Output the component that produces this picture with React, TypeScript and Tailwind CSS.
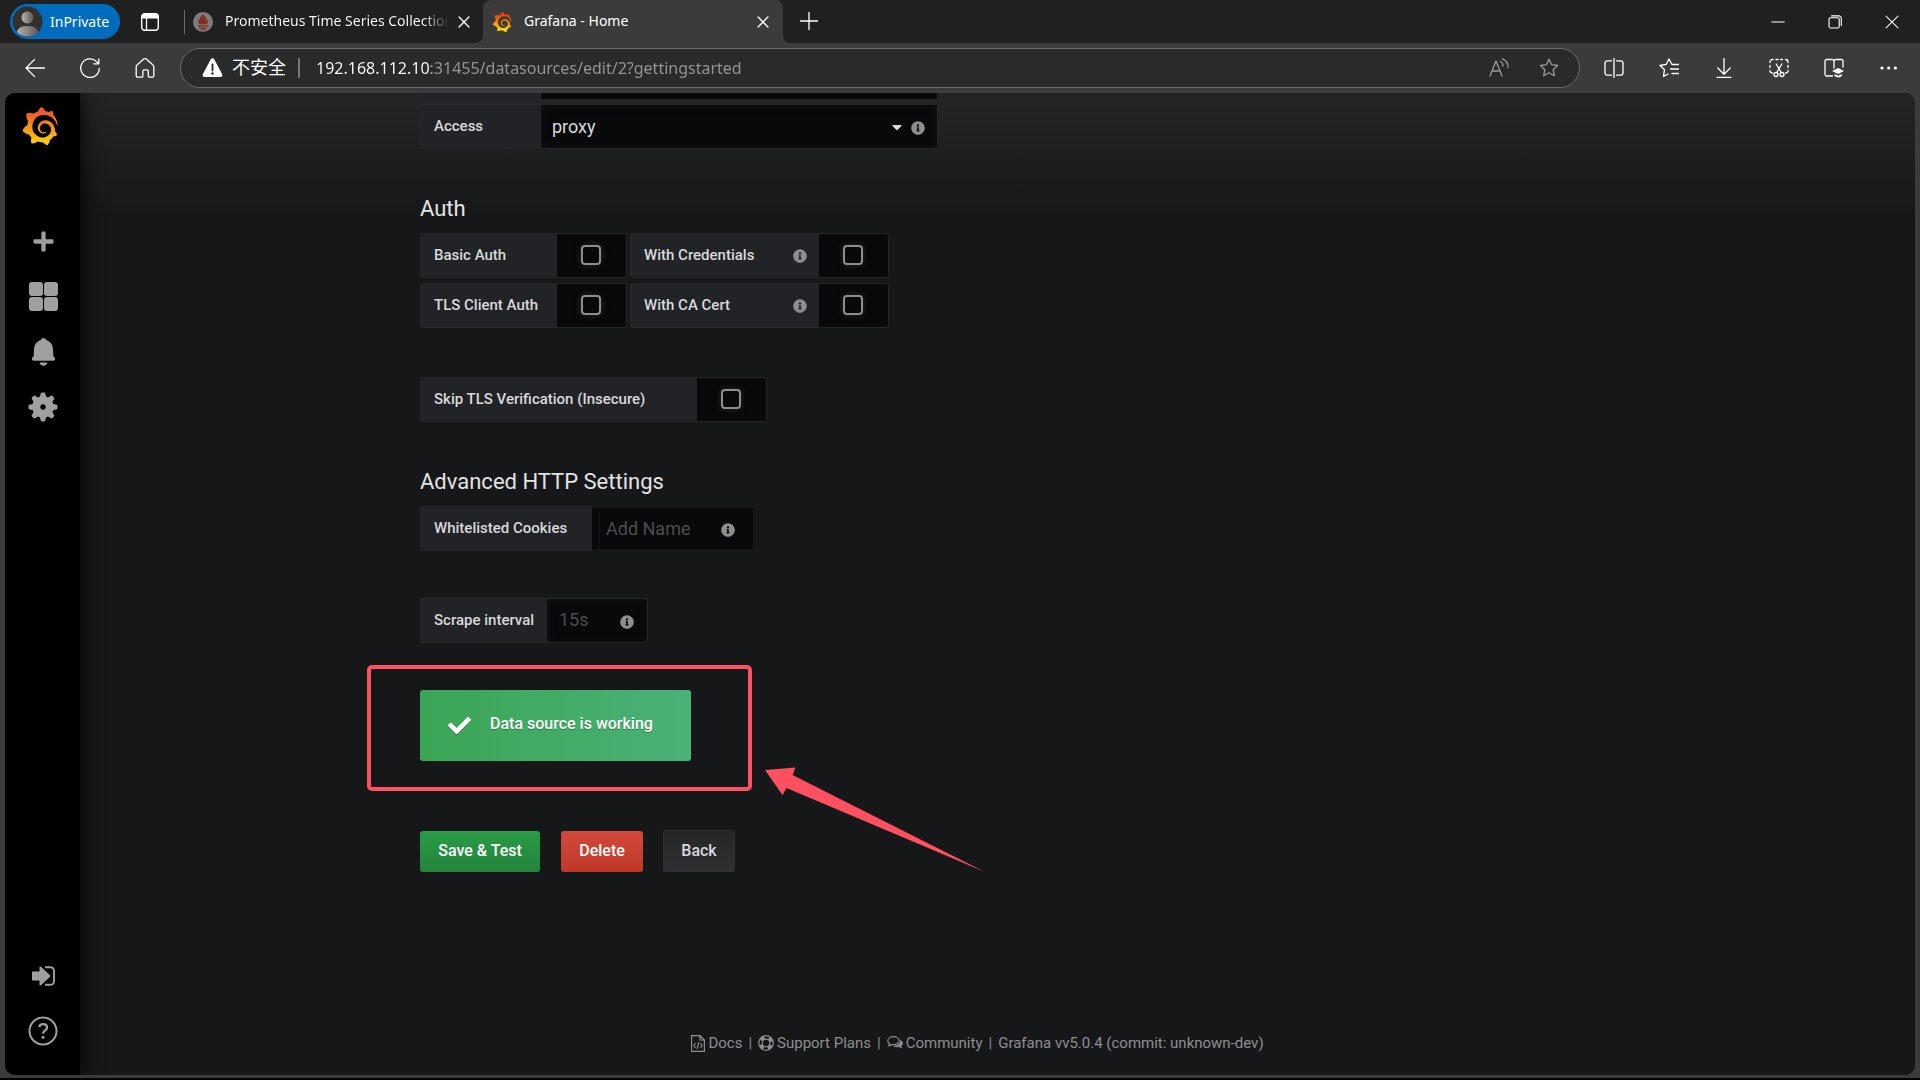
import React from "react";
import { SiGrafana } from "react-icons/si";
import { FaInfoCircle, FaCaretDown, FaCheck, FaPlus } from "react-icons/fa";

type IconProps = { className?: string; children: React.ReactNode; size?: number; weight?: number };

function Line({ className = "", children, size = 20, weight = 1.3 }: IconProps) {
  return (
    <svg
      className={className}
      width={size}
      height={size}
      viewBox="0 0 20 20"
      fill="none"
      stroke="currentColor"
      strokeWidth={weight}
      strokeLinecap="round"
      strokeLinejoin="round"
      aria-hidden="true"
    >
      {children}
    </svg>
  );
}

function GrafanaLogo({ id, className, from, to }: { id: string; className: string; from: string; to: string }) {
  return (
    <span className="flex">
      <svg width="0" height="0" className="absolute" aria-hidden="true">
        <defs>
          <linearGradient id={id} x1="0" y1="0" x2="0" y2="1">
            <stop offset="0.15" stopColor={from} />
            <stop offset="0.9" stopColor={to} />
          </linearGradient>
        </defs>
      </svg>
      <SiGrafana className={className} fill={`url(#${id})`} />
    </span>
  );
}

const STAR = "M10 1.2l2.6 5.5 6 .8-4.4 4.2 1.1 6L10 14.800l-5.300 2.900 1.100-6L1.400 7.500l6-.8z";

function TabStrip() {
  return (
    <header className="flex h-[43px] shrink-0 items-stretch bg-[#202020] text-white">
      <div className="flex w-[483px] items-center">
        <button className="ml-[10px] flex h-[35px] w-[110px] items-center rounded-full bg-[#006cbe] pl-[2px] text-[14px]">
          <svg width="31" height="31" viewBox="0 0 31 31" aria-hidden="true">
            <defs>
              <linearGradient id="person" x1="0" x2="1">
                <stop offset="0" stopColor="#b9b5b0" />
                <stop offset="1" stopColor="#5a5754" />
              </linearGradient>
              <clipPath id="disc">
                <circle cx="15.500" cy="15.500" r="15" />
              </clipPath>
            </defs>
            <circle cx="15.500" cy="15.500" r="15" fill="#33302e" />
            <g clipPath="url(#disc)" fill="url(#person)">
              <circle cx="15.500" cy="11.500" r="6" />
              <path d="M4 31c0-8 4-11 11.500-11S27 23 27 31z" />
            </g>
          </svg>
          <span className="ml-[7px] pb-px">InPrivate</span>
        </button>
        <button aria-label="Tab actions" className="ml-[21px]">
          <svg width="18" height="18" viewBox="0 0 18 18" aria-hidden="true">
            <rect x="0.700" y="0.700" width="16.600" height="16.600" rx="3" fill="none" stroke="#fff" strokeWidth="1.400" />
            <path d="M1 3.500A2.500 2.500 0 0 1 3.500 1h11A2.500 2.500 0 0 1 17 3.500V5.500H1z" fill="#fff" />
            <path d="M5.500 5v12" stroke="#fff" strokeWidth="1.300" />
          </svg>
        </button>
        <span className="ml-[25px] h-6 w-px bg-[#6a6a6a]" />
        <div className="ml-2 flex min-w-0 flex-1 items-center">
          <svg width="20" height="20" viewBox="0 0 20 20" className="shrink-0" aria-hidden="true">
            <circle cx="10" cy="10" r="10" fill="#7d7d7d" />
            <path
              d="M10.200 1.200c.3 1.700 1.500 2.300 1.500 4 .5-.3.600-.8.600-1.300 1 1.400 1.300 2.900.9 4.500.7-.2 1-.7 1.200-1.300.7 1.900.4 3.600-.5 5.100H6.100c-.9-1.500-1.200-3.200-.5-5.100.2.600.5 1.100 1.200 1.300-.4-1.600-.1-3.100.9-4.500 0 .5.100 1 .6 1.300 0-1.700 1.600-2.300 1.900-4zM4.500 13.300h11v1.300h-11zM6 15.500h8v1.200H6zM7.500 17.300h5c-.5.900-1.500 1.300-2.500 1.300s-2-.4-2.500-1.300z"
              fill="#7e2f22"
            />
          </svg>
          <span className="ml-3 min-w-0 flex-1 overflow-hidden whitespace-nowrap bg-[linear-gradient(90deg,#fff_88%,#202020_100%)] bg-clip-text pb-[2px] text-[14px] text-transparent">
            Prometheus Time Series Collection
          </span>
          <button aria-label="Close tab" className="mr-3 ml-2 shrink-0">
            <Line size={14} weight={2}><path d="M3 3l14 14M17 3L3 17" /></Line>
          </button>
        </div>
      </div>
      <div className="relative flex w-[300px] items-center rounded-t-lg bg-[#3b3b3b] pl-[9px]">
        <span className="absolute bottom-0 -left-2 size-2 bg-[radial-gradient(circle_at_0_0,#202020_8px,#3b3b3b_8px)]" />
        <span className="absolute -right-2 bottom-0 size-2 bg-[radial-gradient(circle_at_100%_0,#202020_8px,#3b3b3b_8px)]" />
        <GrafanaLogo id="tabLogo" className="size-5" from="#f43c07" to="#fddb00" />
        <span className="ml-3 flex-1 pb-[2px] text-[14px]">Grafana - Home</span>
        <button aria-label="Close tab" className="mr-[13px]">
          <Line size={14} weight={2}><path d="M3 3l14 14M17 3L3 17" /></Line>
        </button>
      </div>
      <button aria-label="New tab" className="ml-4 pb-[2px]">
        <Line><path d="M10 1.500v17M1.500 10h17" /></Line>
      </button>
      <div className="ml-auto flex items-center gap-[43px] pr-[21px]">
        <button aria-label="Minimize">
          <Line size={14} weight={1.5}><path d="M1 10h18" /></Line>
        </button>
        <button aria-label="Restore">
          <Line size={14} weight={1.6}>
            <rect x="1.500" y="4" width="14.500" height="14.500" rx="2" />
            <path d="M5 1.200h10.500a3.500 3.500 0 0 1 3.500 3.500V15" />
          </Line>
        </button>
        <button aria-label="Close window">
          <Line size={14} weight={1.5}><path d="M1.500 1.500l17 17M18.500 1.500l-17 17" /></Line>
        </button>
      </div>
    </header>
  );
}

function Toolbar() {
  return (
    <div className="flex h-[50px] shrink-0 items-center bg-[#3b3b3b] pb-px text-white">
      <nav className="flex w-[180px] items-center gap-[35px] pl-[25px]">
        <button aria-label="Back"><Line><path d="M19.500 10H1M9.500 1.500L1 10l8.500 8.500" /></Line></button>
        <button aria-label="Refresh"><Line><path d="M19.300 10.500A9.300 9.300 0 1 1 16.500 3.500L18.500 5.700M18.800 .8v5h-5" /></Line></button>
        <button aria-label="Home">
          <Line><path d="M1.200 8.700c0-.7.300-1.300.8-1.700l7-6.200c.6-.5 1.400-.5 2 0l7 6.200c.5.400.8 1 .8 1.700v9.100c0 .8-.5 1.300-1.300 1.300h-3c-.7 0-1.200-.5-1.200-1.200V13c0-.7-.5-1.200-1.200-1.200H9.100c-.7 0-1.200.5-1.200 1.200v4.900c0 .7-.5 1.200-1.200 1.200h-4.200c-.8 0-1.300-.5-1.300-1.300z" /></Line>
        </button>
      </nav>
      <div className="flex h-10 min-w-0 flex-1 items-center rounded-full border border-[#6b6b6b] bg-[#2a2a2a] pl-[21px]">
        <svg width="21" height="20" viewBox="0 0 21 20" aria-hidden="true">
          <path d="M8.800 1.300c.7-1.300 2.700-1.300 3.400 0l8 15c.7 1.300-.2 2.700-1.700 2.700h-16C1 19 .1 17.600.8 16.300z" fill="#fff" />
          <path d="M10.500 6.500v6" stroke="#2a2a2a" strokeWidth="1.800" strokeLinecap="round" />
          <circle cx="10.500" cy="15.500" r="1.200" fill="#2a2a2a" />
        </svg>
        <label htmlFor="url" className="ml-[9px] text-[18px]">不安全</label>
        <span className="ml-[12px] h-5 w-[2px] bg-[#7a7a7a]" />
        <input
          id="url"
          type="text"
          defaultValue="192.168.112.10:31455/datasources/edit/2?gettingstarted"
          className="ml-4 min-w-0 flex-1 bg-[linear-gradient(90deg,#fff_115px,#969696_115px)] bg-clip-text text-[16px] text-transparent outline-none"
        />
        <div className="flex items-center gap-[30px] pr-5 text-[#9a9a9a]">
          <button aria-label="Read aloud">
            <Line><path d="M1 18L7 3l6 15M3 13h8M11.500 3.500c1.500.8 2.500 2.500 2.500 4.500M13.500.8C16.800 2 19 5 19 9.500" /></Line>
          </button>
          <button aria-label="Add to favorites"><Line><path d={STAR} /></Line></button>
        </div>
      </div>
      <div className="flex items-center gap-[35px] pr-[21px] pl-[24px]">
        <button aria-label="Split screen">
          <Line><path d="M10 .5v19M7.500 2.800H3.500A2.500 2.500 0 0 0 1 5.300v9.400a2.500 2.500 0 0 0 2.500 2.500h4M12.500 2.800h4A2.500 2.500 0 0 1 19 5.300v9.400a2.500 2.500 0 0 1-2.500 2.500h-4" /></Line>
        </button>
        <button aria-label="Favorites">
          <Line><path d="M13 6.500L10 1 7.300 6.300 1 7.500l4.500 4.200-1 6.800 4.500-2.500M13 6.500h6.500M11.500 11h8M13 15.500h6.500" /></Line>
        </button>
        <button aria-label="Downloads">
          <Line><path d="M10 .5v15M3.800 10L10 16.200l6.200-6.200M3 19.300h14" /></Line>
        </button>
        <button aria-label="Screenshot">
          <Line>
            <path d="M1 4.500V4a2.500 2.500 0 0 1 2.500-2.500H4M7 1.500h2M11.500 1.500h2M16.500 1.500A2.500 2.500 0 0 1 19 4v.5M19 7.500v2M1 7.500v2M1 12.500c0 1.500 1 2.500 2.500 2.500M19 12.500c0 1.500-1 2.500-2.500 2.500M7.200 6l5 8.500M12.800 6l-5 8.500" />
            <circle cx="7" cy="16.500" r="2" />
            <circle cx="13" cy="16.500" r="2" />
          </Line>
        </button>
        <button aria-label="Immersive reader">
          <Line>
            <path d="M10 3.500C10 2.300 9.200 1.500 8 1.500H2.500C1.700 1.500 1 2.200 1 3v13.500c0 .8.700 1.500 1.500 1.500H8.500M10 3.500C10 2.300 10.800 1.500 12 1.500h5.500c.8 0 1.500.7 1.500 1.500v6M10 3.500V10" />
            <path d="M8 13l6.200-3L20 13l-5.800 3zM10.500 16v1.800c2 2.200 5.500 2.200 7.500 0V16l-3.800 1.800z" fill="currentColor" stroke="none" />
          </Line>
        </button>
        <button aria-label="More">
          <Line>
            <g fill="currentColor" stroke="none">
              <circle cx="3" cy="10" r="1.600" /><circle cx="9.700" cy="10" r="1.600" /><circle cx="16.400" cy="10" r="1.600" />
            </g>
          </Line>
        </button>
      </div>
    </div>
  );
}

function SideMenu() {
  const item = "flex h-[55px] w-full items-center justify-center pl-px";
  return (
    <aside className="z-10 flex w-[75px] shrink-0 flex-col bg-black text-[#9f9f9f] shadow-[0_0_25px_black]">
      <a href="#home" aria-label="Grafana home" className="flex h-[66px] items-center pl-4">
        <GrafanaLogo id="menuLogo" className="size-[38px]" from="#f05a28" to="#fbca0a" />
      </a>
      <nav className="mt-[55px] flex flex-col">
        <button aria-label="Create" className={item}><FaPlus className="size-[23px]" /></button>
        <button aria-label="Dashboards" className={item}>
          <span className="grid grid-cols-2 gap-px">
            {[0, 1, 2, 3].map((n) => <span key={n} className="size-[14px] rounded-[3px] bg-[#9f9f9f]" />)}
          </span>
        </button>
        <button aria-label="Alerting" className={item}>
          <svg width="23" height="28" viewBox="0 0 23 28" fill="currentColor" aria-hidden="true">
            <path d="M11.500 0c1.300 0 2.300.9 2.500 2 4 1 6.900 4.500 7 9.500l.3 6.500 1.400 1.800c.8 1.300.2 2.900-1.200 2.900H1.500C.1 22.700-.5 21.100.3 19.800L1.700 18 2 11.500C2.100 6.500 5 3 9 2c.2-1.100 1.200-2 2.500-2zM7.500 24.500h8c-.3 2-2 3.300-4 3.300s-3.700-1.300-4-3.300z" />
          </svg>
        </button>
        <button aria-label="Configuration" className={item}>
          <svg width="30" height="30" viewBox="-15 -15 30 30" fill="currentColor" aria-hidden="true">
            <defs>
              <mask id="hub">
                <rect x="-15" y="-15" width="30" height="30" fill="#fff" />
                <circle r="2.700" fill="#000" />
              </mask>
            </defs>
            <g mask="url(#hub)">
              <circle r="10.500" />
              {[0, 45, 90, 135, 180, 225, 270, 315].map((a) => (
                <path key={a} transform={`rotate(${a})`} d="M-4.500-9C-3-10-2.600-11.500-2.400-13.200Q-2.200-14.500-1-14.500H1Q2.200-14.500 2.400-13.200C2.600-11.500 3-10 4.500-9z" />
              ))}
            </g>
          </svg>
        </button>
      </nav>
      <nav className="mt-auto mb-[17px] flex flex-col">
        <a href="#login" aria-label="Sign in" className={item}>
          <svg width="23" height="20" viewBox="0 0 23 20" aria-hidden="true">
            <path d="M.5 5.500h7V1.300c0-.8.900-1.100 1.500-.6l9 8.600c.4.400.4 1 0 1.400l-9 8.600c-.6.500-1.500.2-1.500-.6v-4.200h-7c-.3 0-.5-.2-.5-.5V6c0-.3.200-.5.500-.5z" fill="currentColor" />
            <path d="M13 1.200h5.500a3.500 3.500 0 0 1 3.500 3.500v10.600a3.500 3.500 0 0 1-3.500 3.500H13" fill="none" stroke="currentColor" strokeWidth="1.900" />
          </svg>
        </a>
        <button aria-label="Help" className={item}>
          <svg width="30" height="30" viewBox="0 0 30 30" fill="none" stroke="currentColor" aria-hidden="true">
            <circle cx="15" cy="15" r="13.500" strokeWidth="2" />
            <path d="M11.300 11.200c.2-2 1.700-3 3.800-3s3.900 1.100 3.900 3.200c0 3.200-3.900 2.800-3.900 6.300" strokeWidth="2.300" />
            <circle cx="15" cy="21.300" r="1.500" fill="currentColor" stroke="none" />
          </svg>
        </button>
      </nav>
    </aside>
  );
}

const LABEL = "flex h-[45px] items-center rounded-l-[3px] border border-[#27282b] border-r-0 bg-[#212327] pl-[13px] text-[15px] font-medium text-[#d8d9da]";
const FIELD = "border border-[#262628] bg-[#09090b]";

function Switch({ id, label, width, info }: { id: string; label: string; width: string; info?: boolean }) {
  return (
    <div className="flex">
      <label htmlFor={id} className={`${LABEL} ${width} justify-between pr-3`}>
        {label}
        {info && <FaInfoCircle className="size-[14px] text-[#8e8e8e]" />}
      </label>
      <span className={`flex w-[70px] items-center justify-center rounded-r-[3px] border-l-0 pr-px pb-px ${FIELD}`}>
        <input
          id={id}
          type="checkbox"
          className="size-5 appearance-none rounded-[4px] border-2 border-[#8e8e8e] bg-[#09090b] shadow-[0_0_6px_#2a2a2c] checked:bg-[#33b5e5]"
        />
      </span>
    </div>
  );
}

function SettingsForm() {
  return (
    <form className="flex flex-col items-start" onSubmit={(e) => e.preventDefault()}>
      <div className="flex h-[7px]">
        <span className="w-[120px] rounded-b-[3px] border border-t-0 border-[#27282b] bg-[#212327]" />
        <span className={`w-[398px] rounded-b-[3px] border-t-0 ${FIELD}`} />
      </div>
      <div className="mt-1 flex">
        <label htmlFor="access" className={`${LABEL} w-[120px]`}>Access</label>
        <div className={`relative flex w-[398px] items-center rounded-[3px] shadow-[inset_0_0_8px_#141416] ${FIELD}`}>
          <select id="access" className="h-full w-full appearance-none bg-transparent pl-[11px] text-[18px] text-[#d8d9da]">
            <option>proxy</option>
          </select>
          <FaCaretDown className="pointer-events-none absolute right-8 size-4 text-[#d8d9da]" />
          <FaInfoCircle className="pointer-events-none absolute right-3 mt-[3px] size-[14px] text-[#8e8e8e]" />
        </div>
      </div>

      <h3 className="mt-[46px] mb-[10px] text-[22px] leading-7">Auth</h3>
      <div className="flex flex-col gap-[5px]">
        <div className="flex gap-[3px]">
          <Switch id="basic" label="Basic Auth" width="w-[137px]" />
          <Switch id="cred" label="With Credentials" width="w-[189px]" info />
        </div>
        <div className="flex gap-[3px]">
          <Switch id="tls" label="TLS Client Auth" width="w-[137px]" />
          <Switch id="ca" label="With CA Cert" width="w-[189px]" info />
        </div>
      </div>
      <div className="mt-[49px]">
        <Switch id="skip" label="Skip TLS Verification (Insecure)" width="w-[277px]" />
      </div>

      <h3 className="mt-[46px] mb-[10px] text-[22px] leading-7">Advanced HTTP Settings</h3>
      <div className="flex items-center">
        <label htmlFor="cookies" className={`${LABEL} w-[172px]`}>Whitelisted Cookies</label>
        <div className="flex h-[41px] w-[161px] items-center bg-[#09090b] pl-[7px]">
          <input id="cookies" type="text" placeholder="Add Name" className="h-full w-[93px] border-l border-[#141416] bg-transparent pl-[6px] text-[18px] text-[#d8d9da] outline-none placeholder:text-[#4c4c4e]" />
          <FaInfoCircle className="mt-[3px] mr-[18px] ml-auto size-[14px] text-[#8e8e8e]" />
        </div>
      </div>
      <div className="mt-[47px] flex">
        <label htmlFor="scrape" className={`${LABEL} w-[127px]`}>Scrape interval</label>
        <div className={`flex w-[101px] items-center rounded-r-[3px] border-l-0 shadow-[inset_0_0_8px_#141416] ${FIELD}`}>
          <input id="scrape" type="text" placeholder="15s" className="h-full min-w-0 flex-1 bg-transparent pb-[2px] pl-3 text-[18px] text-[#d8d9da] outline-none placeholder:text-[#4c4c4e]" />
          <FaInfoCircle className="mt-[3px] mr-[13px] size-[14px] text-[#8e8e8e]" />
        </div>
      </div>

      <div className="relative mt-[47px]">
        <div role="status" className="flex h-[71px] w-[271px] items-center rounded-[3px] bg-[linear-gradient(90deg,#3aa655,#4ab178)] pl-7 text-white">
          <FaCheck className="size-[23px] drop-shadow-[0_1px_0_#2c7a40]" />
          <span className="ml-[19px] pb-1 text-[16px] font-medium [text-shadow:0_1px_0_#2c7a40]">Data source is working</span>
        </div>
        <span className="pointer-events-none absolute top-[-25px] left-[-53px] h-[126px] w-[385px] rounded-[5px] border-4 border-[#ff5062]" />
        <svg className="pointer-events-none absolute top-[77px] left-[345px]" width="220" height="106" viewBox="0 0 220 106" aria-hidden="true">
          <path d="M0 3L30.500.5 27.500 8 220 105 21.500 21 17.500 28z" fill="#ff5062" />
        </svg>
      </div>

      <div className="mt-[69px] flex items-end text-[16px] font-medium">
        <button className="h-[41px] w-[120px] rounded-[3px] bg-[linear-gradient(180deg,#299c46,#23843b)] pb-[2px] text-white">Save &amp; Test</button>
        <button className="ml-[21px] h-[41px] w-[82px] rounded-[3px] bg-[linear-gradient(180deg,#d44a3a,#bd3829)] pb-[2px] text-white">Delete</button>
        <a href="#back" className="ml-5 flex h-[42px] w-[72px] items-center justify-center rounded-[3px] border border-[#2f2f32] bg-[linear-gradient(180deg,#262628,#303032)] text-[#d8d9da]">Back</a>
      </div>
    </form>
  );
}

function Footer() {
  const link = "flex items-center gap-[3px]";
  return (
    <footer className="mt-auto mb-[21px] flex items-center justify-center gap-[6px] pr-10 text-[15px] leading-[22px] text-[#8e8e8e]">
      <a href="#docs" className={link}>
        <svg width="14" height="17" viewBox="0 0 14 17" fill="none" stroke="currentColor" strokeWidth="1.200" aria-hidden="true">
          <path d="M.6.6h8.400l4.400 4.400v11.400H.6zM9 .6v4.400h4.400M4.500 8L2.800 10.500 4.500 13M9.500 8l1.700 2.500L9.500 13M7.800 7.200L6.200 13.800" />
        </svg>
        Docs
      </a>
      <span>|</span>
      <a href="#support" className={link}>
        <svg width="16" height="16" viewBox="0 0 16 16" fill="none" stroke="currentColor" aria-hidden="true">
          <circle cx="8" cy="8" r="7.300" strokeWidth="1.200" />
          <circle cx="8" cy="8" r="3.800" strokeWidth="1.200" />
          <circle cx="8" cy="8" r="5.600" strokeWidth="3.800" strokeDasharray="4.400 4.400" strokeDashoffset="-2.200" />
        </svg>
        Support Plans
      </a>
      <span>|</span>
      <a href="#community" className={link}>
        <svg width="16" height="14" viewBox="0 0 16 14" aria-hidden="true">
          <path d="M13.300 3.800c1.600.8 2.700 2 2.700 3.500 0 1.200-.7 2.200-1.800 3 .2.900.7 1.400 1.300 2-1.500.1-2.700-.5-3.600-1.200-2.200.4-4.400 0-6-1.100 4.500 0 8-2.500 7.400-6.200z" fill="currentColor" />
          <path d="M6.500.7c3.200 0 5.700 1.800 5.700 4s-2.500 4-5.700 4c-.6 0-1.200-.1-1.700-.2C4 9.200 3 9.800 1.700 10c.6-.7.900-1.400 1-2.200C1.500 7.100.8 6 .8 4.700c0-2.200 2.500-4 5.700-4z" fill="none" stroke="currentColor" strokeWidth="1.200" />
        </svg>
        Community
      </a>
      <span>|</span>
      <a href="#version">Grafana vv5.0.4 (commit: unknown-dev)</a>
    </footer>
  );
}

export default function App() {
  return (
    <div className="flex min-h-screen flex-col border-b-2 border-black bg-[#3b3b3b] font-['Noto_Sans','Noto_Sans_CJK_SC',sans-serif]">
      <TabStrip />
      <Toolbar />
      <main className="mx-[5px] mb-[3px] flex flex-1 overflow-hidden rounded-[10px] bg-[#161719] font-[Roboto,sans-serif] text-[#e3e3e3]">
        <SideMenu />
        <div className="flex min-w-0 flex-1 flex-col bg-[linear-gradient(180deg,#222426_12px,#161719_125px)]">
          <div className="mx-auto w-full max-w-[1225px] px-[35px]">
            <SettingsForm />
          </div>
          <Footer />
        </div>
      </main>
    </div>
  );
}
